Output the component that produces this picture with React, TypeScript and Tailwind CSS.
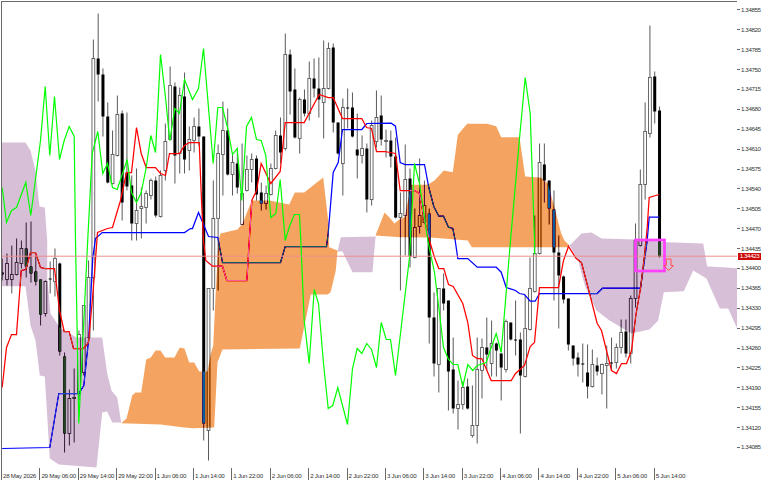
const X = (i: number) => 1.7 + 4.798 * i;

// [bull, wickTop, bodyTop, bodyBottom, wickBottom]
const candles: number[][] = [
  [0,258,272,274,280],[1,253,263,279,285],[1,245,274,279,293],[1,238,262,274,275],[1,240,248,263,268],
  [0,222,248,266,277],[0,221,266,273,282],[0,255,271,281,285],[0,279,279,314,325],[1,280,281,313,316],
  [0,261,278,279,293],[1,248,258,281,296],[0,262,263,351,355],[0,352,356,433,452],[1,389,398,433,445],
  [1,368,397,398,442],[1,330,334,393,400],[1,335,305,372,375],[1,260,277,337,340],[1,39,58,277,330],
  [0,13,58,74,101],[0,68,74,116,136],[0,102,116,182,183],[1,130,154,183,184],[1,95,114,155,156],
  [0,110,113,202,220],[0,112,172,186,190],[0,175,185,223,240],[1,168,210,223,240],[1,187,206,208,238],
  [1,190,193,207,223],[1,178,180,195,199],[0,176,180,215,217],[1,170,175,216,217],[1,123,141,170,180],
  [1,66,85,139,140],[0,82,86,155,183],[1,87,95,153,173],[0,72,96,159,173],[1,126,139,150,170],
  [1,117,126,140,152],[0,108,126,136,145],[0,136,136,423,440],[1,288,288,430,460],[1,180,218,288,310],
  [1,144,153,218,290],[1,101,130,154,195],[0,108,130,174,175],[1,153,162,174,195],[0,148,163,187,193],
  [1,143,193,224,224],[1,155,169,190,191],[1,153,159,169,182],[0,155,158,194,200],[0,182,192,203,210],
  [1,185,193,203,209],[1,163,168,194,195],[1,130,135,168,169],[0,117,135,152,163],[1,33,54,148,150],
  [0,49,54,91,114],[0,68,89,137,138],[1,97,99,138,153],[0,89,99,113,116],[1,61,78,113,120],
  [0,58,78,88,97],[0,57,88,99,117],[1,40,88,102,138],[1,42,48,88,89],[0,43,47,122,132],
  [0,122,122,153,154],[1,98,107,163,195],[0,88,107,108,128],[0,92,107,136,137],[0,113,149,155,178],
  [1,135,148,155,163],[0,143,148,199,212],[1,120,125,199,205],[1,90,117,141,147],[0,95,115,139,145],
  [1,129,140,141,157],[0,130,140,156,167],[0,137,156,217,218],[1,192,213,217,290],[1,144,179,215,255],
  [0,168,178,256,267],[1,208,227,257,258],[1,158,215,226,233],[1,180,205,222,223],[0,208,213,317,343],
  [0,292,317,363,376],[1,288,288,364,392],[0,273,288,303,310],[0,300,300,371,410],[0,337,369,408,413],
  [1,380,404,408,429],[1,381,387,404,409],[0,378,386,408,409],[1,385,425,435,437],[1,337,369,425,443],
  [1,338,347,370,398],[0,317,347,354,370],[1,320,343,363,376],[0,342,343,350,376],[0,353,353,367,400],
  [1,319,321,369,372],[0,322,322,339,340],[0,300,339,340,355],[0,332,339,375,433],[1,295,328,376,377],
  [1,257,288,329,330],[1,215,253,291,292],[1,143,162,253,254],[0,143,164,180,202],[0,180,180,208,224],
  [0,190,209,252,300],[0,235,252,275,328],[0,275,276,299,303],[0,298,298,344,350],[0,345,345,358,365],
  [0,352,357,364,376],[0,343,363,364,382],[0,344,372,386,398],[1,349,364,386,387],[0,357,365,371,375],
  [1,363,364,373,394],[1,345,363,365,408],[0,337,362,363,370],[1,343,347,362,368],[1,319,332,347,353],
  [0,319,331,353,357],[1,295,298,353,363],[1,223,240,298,307],[1,169,184,245,246],[1,102,131,184,199],
  [1,25,77,133,137],[0,71,76,111,123],[0,106,110,256,257],
];

const tenkan = "1.7,387 6,347 11,334 16,334 20.7,270 25.4,269 30,252 35,252 40,267 44.7,268 54,268 59,310 63.7,331 68.7,331 73,348 83,348 88,342 92.7,290 97,232 107,228 112,227 120,200 126,172 131,172 136,127 140.7,153 145.7,167 155,167 160,173 165,175 169,153 179,153 184,145 188.7,142 198.7,142 201,200 203,240 205.3,260 212,265.7 222,265.7 226.3,280 246.3,280 251.3,200 256,190 260.7,163 270.3,183 279.7,171 284.7,122 303.7,122 318.7,94 327.7,97 332.7,97 342,118 361.3,118 366,127 371,128 376,151 384,151 395,153 399.7,190 414,190 419,193 424,220 429,240 434,257 438.3,268 443.3,268 448,284 452.7,286 462.3,303 467.3,322 472,355 476.7,358 481.3,358 490.7,380 510.7,380 515,373 524,365 529.7,346 534,342 539,287 558,287 563,260 568,246 575.7,258 581,262 587,285 596.7,323 601,330 611,370 616,373 621,363 626,363 631,350 635.3,315 640,288 644.3,252 646.7,227 648.7,197 658.7,194";
const kijun = "1.7,448 49.3,447 58.3,393 78.3,393 83.3,385 88,340 92.3,257 95,238 101.7,232 184,232 190,228 192,228 198,212 208,236 217.3,237 222,262 280,262 284.7,246 326,246 327.7,233 332.7,172 337.7,162 342,129 361.3,129 366.3,123 390.7,122.7 395,125.7 399.7,162 404.7,164 424,164 428.3,187 433.3,206 438.3,215.7 443,215.7 448,226.7 452.3,228 454.7,240 457.3,258 467.3,258 476.7,266.7 495.7,266.7 500.7,271.7 505.7,287 515,290 519,293 524,294 529.7,300.7 534.7,300.7 539,293 596.7,293 602,287.7 640,287.7 646.7,240 648.7,216.7 658.7,216.7";
const chikou = "1.7,187 6,222 11,210 16,207 25.3,182 30.3,215 40,140 44.7,86 49.3,155 54,96 59,159 63.7,140 68.7,126 73.7,136 75,240 78.3,423 87.3,238 91.7,153 97.3,131 102.3,173 107,163 112,187 116.7,189 126.7,159 131,192 136,202 140.7,192 145.7,167 150.3,135 155,152 160,54 165,97 169.3,140 174.3,108 179,113 184,79 192,99 198,88 203,48 212.7,163 217.3,107 222,107 227,127 232,154 236.7,148 241.3,200 246,126 251,117 256,139 260.7,140 265.3,155 270.3,217 275.3,213 279.7,179 284.7,240 289.3,225 294,214 299,214 300.3,240 303.7,320 308.7,363 313.7,289 318,303 323,363 327.7,408 332.3,405 337.3,387 347,424 352,368 356.7,348 361.3,353 366.3,343 371,349 376,367 380.7,322 384,333 385.7,339 390,339 395,375 409,257 414,163 419,183 427.3,240 434,272 438.3,307 443,347 448,359 452.7,364 457.3,364 462.3,386 467.3,364 472.3,370 476.7,365 485.7,362 490.7,347 495.7,333 500.7,352 510,240 519,138 524.7,77 529.7,113 534,240 534,254";

const thistle1 = "1.5,142 25,142 30,150 35,170 39,206 44.3,207 46.7,240 46.7,277 50,313 59.3,327 76,337 101.7,337 106.7,373 111,390 116.7,397 120.7,422 111.7,422 106.7,411 101.7,412 96,467 58.3,464 49.3,458 44.3,376 39.3,375 35,340 30,325 25,285.7 1.5,285.7";
const orange1 = "120.7,422.7 126,418 131.7,395 135,392 140.7,392 145.7,359 150.3,357 155,350 160,350 164.7,357 174,357 179.3,347 184,348 188.7,362 193.7,362 198.7,371 207,371 210.3,353 212.7,345 215.3,290 218,240 220,233 237,229 242,223 251.3,200 269,200 288.7,204 294.3,192 303.7,192 313.7,184 322.7,177 327.7,220 328.7,246.7 337,250 335.3,270 330,292 327,294 310.3,294 299.3,348 222,349 217,361.7 213.7,427 192,427.7 181.7,426.7 160,424";
const thistle2 = "337,251 340.3,236.7 375.3,236 374.7,240 372,271.7 352,271.7 345.3,258 342,251";
const orange2 = "375,235 384,212 389,217 394,223 400,218 404,217 410.7,184.3 427.3,184.3 434,180 443.3,170 452.3,171.7 457.3,134.3 466.7,123.3 486.7,123.3 495.7,125.7 500.7,136.7 519,136.7 524.7,176 540.7,177.3 547.3,183 554,207 560.7,233 564,240 569,245 567,246.7 471.3,246.7 467.3,240 430,237 400,236.7";
const thistle3 = "569,245 581,233 591,232 601,238 636,239 666,241.7 702.7,243 706.7,266 722.7,266.7 737,267.7 737,329 727.7,308 719.3,308 712,291.7 706,278 692.7,270 683.3,290.7 663.3,291.7 657.7,320 649,329 631,333 609,320 596,310 584.3,285 577.7,260";

const prices = ["1.34855","1.34820","1.34785","1.34750","1.34715","1.34680","1.34645","1.34610","1.34575","1.34540","1.34505","1.34470","1.34435","1.34400","1.34365","1.34330","1.34295","1.34260","1.34225","1.34190","1.34155","1.34120","1.34085"];
const times = ["28 May 2026","29 May 06:00","29 May 14:00","29 May 22:00","1 Jun 06:00","1 Jun 14:00","1 Jun 22:00","2 Jun 06:00","2 Jun 14:00","2 Jun 22:00","3 Jun 06:00","3 Jun 14:00","3 Jun 22:00","4 Jun 06:00","4 Jun 14:00","4 Jun 22:00","5 Jun 06:00","5 Jun 14:00"];

function Chart() {
  return (
    <svg width={735} height={466} viewBox="1.5 1.5 735 466" className="block blur-[0.3px]">
      <rect x="0" y="0" width="768" height="480" fill="#ffffff" />
      {candles.map((c, i) => {
        const x = X(i);
        return (
          <g key={i}>
            <line x1={x} x2={x} y1={c[1]} y2={c[4]} stroke="#5a5a5a" strokeWidth="1" />
            {c[0] ? (
              <rect x={x - 1.4} y={c[2]} width={2.8} height={Math.max(c[3] - c[2], 1)} fill="#ffffff" stroke="#5a5a5a" strokeWidth="0.9" />
            ) : (
              <rect x={x - 1.5} y={c[2]} width={3} height={Math.max(c[3] - c[2], 1)} fill="#000000" />
            )}
          </g>
        );
      })}
      <polyline points={kijun} fill="none" stroke="#0000ff" strokeWidth="1.25" />
      <polyline points={tenkan} fill="none" stroke="#ff0000" strokeWidth="1.25" />
      <polygon points={thistle1} fill="#274027" className="mix-blend-difference" />
      <polygon points={thistle2} fill="#274027" className="mix-blend-difference" />
      <polygon points={thistle3} fill="#274027" className="mix-blend-difference" />
      <polygon points={orange1} fill="#0b5b9f" className="mix-blend-difference" />
      <polygon points={orange2} fill="#0b5b9f" className="mix-blend-difference" />
      <polyline points={chikou} fill="none" stroke="#00ff00" strokeWidth="1.2" />
      <line x1="0" x2="737" y1="255.7" y2="255.7" stroke="#ec8f8f" strokeWidth="1" />
      <rect x="635" y="239.5" width="29" height="31" fill="none" stroke="#ff40ff" strokeWidth="2.7" />
      <path d="M665.8 258.5 H670.5 V265 H673 L668.2 270 L663.3 265 H665.8 Z" fill="none" stroke="#ff5050" strokeWidth="1" />
    </svg>
  );
}

export default function App() {
  return (
    <div className="relative h-[480px] w-[768px] overflow-hidden bg-white text-[6.2px] leading-none text-[#333333] [font-family:'Liberation_Sans',Arial,sans-serif]">
      <div className="flex h-[468px]">
        <div className="ml-px mt-px h-[467px] w-[736px] shrink-0 border border-[#6a6a6a]">
          <Chart />
        </div>
        <div className="flex w-[31px] flex-col tracking-[-0.4px]">
          {prices.map((p) => (
            <div key={p} className="flex h-[19.9px] shrink-0 items-center gap-px">
              <span className="h-px w-[3px] bg-[#6a6a6a]" />
              <span>{p}</span>
            </div>
          ))}
        </div>
      </div>
      <div className="flex pl-px tracking-[-0.25px]">
        {times.map((t) => (
          <div key={t} className="h-[12px] w-[38.4px] shrink-0 whitespace-nowrap border-l border-[#6a6a6a] pl-px pt-[5px]">
            {t}
          </div>
        ))}
      </div>
      <div className="absolute left-[738px] top-[252.5px] flex h-[7px] w-[23px] items-center justify-center bg-[#cc0808] tracking-[-0.4px] text-white">
        1.34423
      </div>
    </div>
  );
}
